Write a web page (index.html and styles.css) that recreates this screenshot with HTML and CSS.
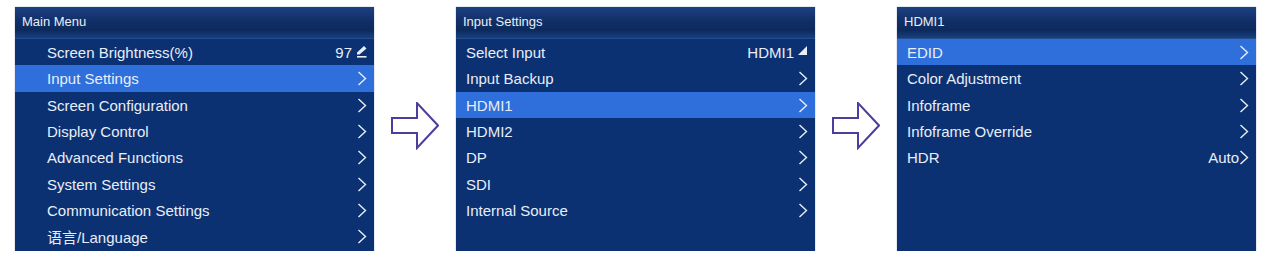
FILE: index.html
```html
<!DOCTYPE html>
<html lang="en">
<head>
  <meta charset="UTF-8" />
  <title>Menu Navigation</title>
  <link rel="stylesheet" href="styles.css">
</head>
<body>
  <div class="flow">

    <!-- Main Menu -->
    <div class="panel">
      <div class="panel-title">Main Menu</div>
      <div class="menu indent">
        <div class="item"><span>Screen Brightness(%)</span>
          <span class="value">97
            <svg class="edit" width="11" height="12" viewBox="0 0 11 12"><polygon points="8,0 10.5,2.5 3.5,8.5 1,8.5 1,6.5" fill="#e8eef8"/><rect x="1" y="10" width="9.5" height="1.6" fill="#e8eef8"/></svg>
          </span>
        </div>
        <div class="item active"><span>Input Settings</span><svg class="chev" viewBox="0 0 10 15"><polyline points="1.5,1 8.5,7.5 1.5,14"/></svg></div>
        <div class="item"><span>Screen Configuration</span><svg class="chev" viewBox="0 0 10 15"><polyline points="1.5,1 8.5,7.5 1.5,14"/></svg></div>
        <div class="item"><span>Display Control</span><svg class="chev" viewBox="0 0 10 15"><polyline points="1.5,1 8.5,7.5 1.5,14"/></svg></div>
        <div class="item"><span>Advanced Functions</span><svg class="chev" viewBox="0 0 10 15"><polyline points="1.5,1 8.5,7.5 1.5,14"/></svg></div>
        <div class="item"><span>System Settings</span><svg class="chev" viewBox="0 0 10 15"><polyline points="1.5,1 8.5,7.5 1.5,14"/></svg></div>
        <div class="item"><span>Communication Settings</span><svg class="chev" viewBox="0 0 10 15"><polyline points="1.5,1 8.5,7.5 1.5,14"/></svg></div>
        <div class="item"><span>语言/Language</span><svg class="chev" viewBox="0 0 10 15"><polyline points="1.5,1 8.5,7.5 1.5,14"/></svg></div>
      </div>
    </div>

    <svg class="step" width="48" height="48" viewBox="0 0 48 48">
      <polygon points="1,16 26,16 26,1 47,23.5 26,46 26,31 1,31" fill="#fff" stroke="#4b3f9e" stroke-width="2"/>
    </svg>

    <!-- Input Settings -->
    <div class="panel">
      <div class="panel-title">Input Settings</div>
      <div class="menu">
        <div class="item"><span>Select Input</span>
          <span class="value">HDMI1
            <svg class="tri" width="10" height="10" viewBox="0 0 10 10"><polygon points="9,0 9,9 0,9" fill="#e8eef8"/></svg>
          </span>
        </div>
        <div class="item"><span>Input Backup</span><svg class="chev" viewBox="0 0 10 15"><polyline points="1.5,1 8.5,7.5 1.5,14"/></svg></div>
        <div class="item active"><span>HDMI1</span><svg class="chev" viewBox="0 0 10 15"><polyline points="1.5,1 8.5,7.5 1.5,14"/></svg></div>
        <div class="item"><span>HDMI2</span><svg class="chev" viewBox="0 0 10 15"><polyline points="1.5,1 8.5,7.5 1.5,14"/></svg></div>
        <div class="item"><span>DP</span><svg class="chev" viewBox="0 0 10 15"><polyline points="1.5,1 8.5,7.5 1.5,14"/></svg></div>
        <div class="item"><span>SDI</span><svg class="chev" viewBox="0 0 10 15"><polyline points="1.5,1 8.5,7.5 1.5,14"/></svg></div>
        <div class="item"><span>Internal Source</span><svg class="chev" viewBox="0 0 10 15"><polyline points="1.5,1 8.5,7.5 1.5,14"/></svg></div>
      </div>
    </div>

    <svg class="step" width="48" height="48" viewBox="0 0 48 48">
      <polygon points="1,16 26,16 26,1 47,23.5 26,46 26,31 1,31" fill="#fff" stroke="#4b3f9e" stroke-width="2"/>
    </svg>

    <!-- HDMI1 -->
    <div class="panel">
      <div class="panel-title">HDMI1</div>
      <div class="menu">
        <div class="item active"><span>EDID</span><svg class="chev" viewBox="0 0 10 15"><polyline points="1.5,1 8.5,7.5 1.5,14"/></svg></div>
        <div class="item"><span>Color Adjustment</span><svg class="chev" viewBox="0 0 10 15"><polyline points="1.5,1 8.5,7.5 1.5,14"/></svg></div>
        <div class="item"><span>Infoframe</span><svg class="chev" viewBox="0 0 10 15"><polyline points="1.5,1 8.5,7.5 1.5,14"/></svg></div>
        <div class="item"><span>Infoframe Override</span><svg class="chev" viewBox="0 0 10 15"><polyline points="1.5,1 8.5,7.5 1.5,14"/></svg></div>
        <div class="item"><span>HDR</span><span class="value tight">Auto<svg class="chev" viewBox="0 0 10 15"><polyline points="1.5,1 8.5,7.5 1.5,14"/></svg></span></div>
      </div>
    </div>

  </div>
</body>
</html>
```

FILE: styles.css
```css
:root {
  --panel-bg: #0b3172;
  --active: #2e6fdb;
  --text: #e8eef8;
}

* { margin: 0; padding: 0; box-sizing: border-box; }

body {
  background: #fff;
  font-family: "Liberation Sans", Arial, "Noto Sans CJK SC", sans-serif;
  color: var(--text);
}

.flow {
  display: flex;
  align-items: flex-start;
  padding: 7px 0 0 15px;
}

.panel {
  width: 359px;
  height: 244px;
  background: var(--panel-bg);
  box-shadow: 0 0 1px rgba(11,49,114,0.6);
}

.panel-title {
  height: 32px;
  padding: 7px 0 0 7px;
  font-size: 13px;
  background: linear-gradient(to bottom, #1c4182 0%, #112f66 45%, #0d2a5d 75%, #17407f 100%);
  border-bottom: 1px solid #244d8e;
}

.menu .item {
  display: flex;
  justify-content: space-between;
  align-items: center;
  height: 26.3px;
  padding: 1px 7px 0 10px;
  font-size: 15px;
}
.menu.indent .item { padding-left: 32px; }

.item.active { background: var(--active); }

.value {
  display: flex;
  align-items: center;
  gap: 4px;
}
.value.tight { gap: 0; }

.edit { margin-top: -2px; }
.tri { margin-top: -4px; }

.chev {
  width: 10px;
  height: 15px;
  flex: none;
}
.chev polyline {
  fill: none;
  stroke: var(--text);
  stroke-width: 1.4;
}

.step {
  margin: 95px 17px 0 17px;
  flex: none;
}
```
